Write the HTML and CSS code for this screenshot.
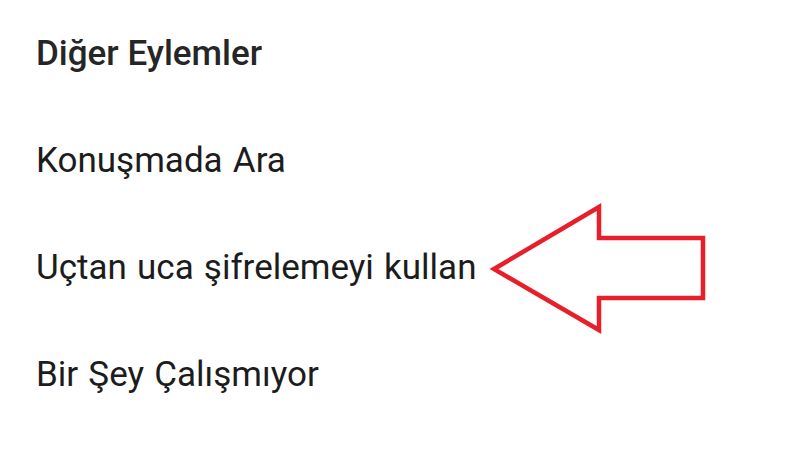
FILE: index.html
```html
<!DOCTYPE html>
<html lang="tr">
<head>
<meta charset="utf-8">
<link rel="stylesheet" href="styles.css">
</head>
<body>
<div class="menu">
  <div class="row title">Diğer Eylemler</div>
  <div class="row item">Konuşmada Ara</div>
  <div class="row item">Uçtan uca şifrelemeyi kullan</div>
  <div class="row item">Bir Şey Çalışmıyor</div>
</div>
<svg class="arrow" width="800" height="450" viewBox="0 0 800 450">
  <polygon points="494,269 599,207 599,238 703,238 703,298 599,298 599,330" fill="none" stroke="#e61f2b" stroke-width="4.5" stroke-linejoin="miter"/>
</svg>
</body>
</html>
```
FILE: styles.css
```css
html, body {
  margin: 0;
  padding: 0;
  background: #ffffff;
}
body {
  width: 800px;
  height: 450px;
  position: relative;
  overflow: hidden;
  font-family: Roboto, "Noto Sans", sans-serif;
  color: #1c1c1c;
}
.menu {
  display: flex;
  flex-direction: column;
  padding-left: 36px;
}
.row {
  height: 107px;
  line-height: 107px;
  white-space: nowrap;
}
.title {
  font-size: 35px;
  font-weight: 500;
  color: #262626;
}
.item {
  font-size: 35px;
  font-weight: 400;
  word-spacing: 1.5px;
}
.arrow {
  position: absolute;
  left: 0;
  top: 0;
}
```
